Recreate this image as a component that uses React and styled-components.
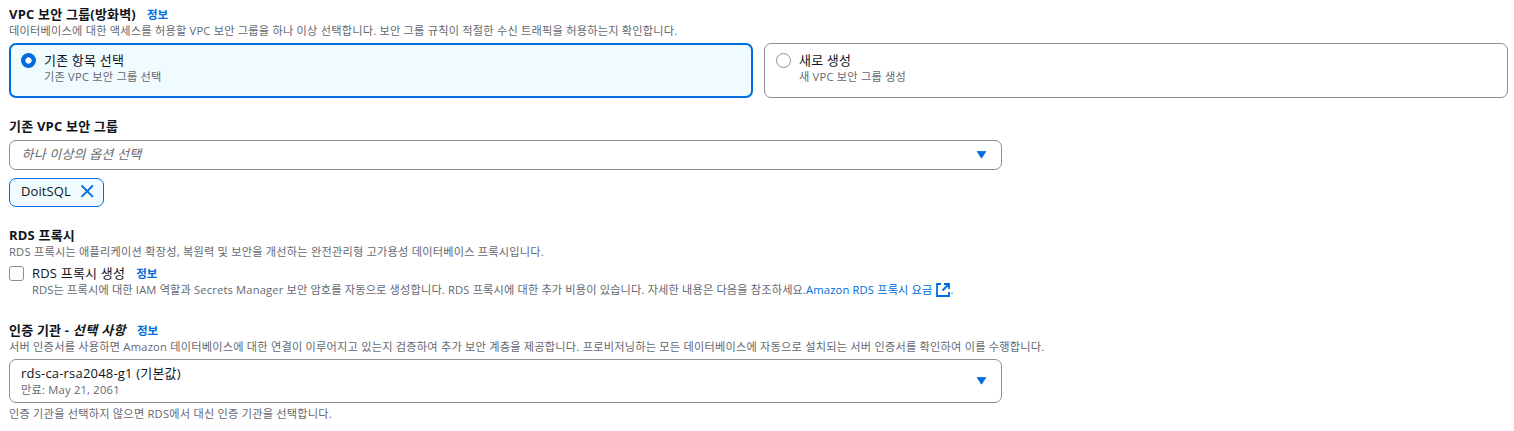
import React from "react";
import styled, { createGlobalStyle } from "styled-components";

const blue = "#006ce0";
const ink = "#0f141a";
const grey = "#656871";
const line = "#8c8c94";

const GlobalStyle = createGlobalStyle`
  * { box-sizing: border-box; }
  body {
    margin: 0;
    background: #fff;
    color: ${ink};
    font-family: "Open Sans", "Noto Sans CJK KR", sans-serif;
    font-size: 13px;
    line-height: 18px;
    white-space: nowrap;
  }
`;

const Form = styled.main`
  display: flex;
  flex-direction: column;
  gap: 19px;
  padding: 5px 6px 0 9px;
`;

const Field = styled.section`
  display: flex;
  flex-direction: column;
`;

const LabelRow = styled.div`
  display: flex;
  align-items: flex-start;
  gap: 11px;
  height: 18px;
`;

const Label = styled.span`
  font-weight: ${(p) => (p.$plain ? 400 : 700)};
  line-height: 18px;
  letter-spacing: 0.2px;

  i {
    letter-spacing: 0.4px;
  }
`;

const OptionLabel = styled.div`
  height: 18px;
  line-height: 18px;
  letter-spacing: 0.19px;
`;

const InfoLink = styled.a`
  color: ${blue};
  font-size: 11.5px;
  font-weight: 700;
  line-height: 19px;
`;

const Hint = styled.div`
  display: flex;
  align-items: center;
  height: 15px;
  color: ${grey};
  font-size: 11.2px;
  line-height: 15px;
  letter-spacing: ${(p) => (p.$tight ? 0.15 : 0.21)}px;
`;

const FooterHint = styled(Hint)`
  margin-top: 3px;
`;

const Tiles = styled.div`
  display: grid;
  grid-template-columns: 1fr 1fr;
  gap: 11px;
  margin-top: 5px;
`;

const Tile = styled.div`
  display: flex;
  gap: 8px;
  height: 55px;
  padding: ${(p) => (p.$selected ? "6px 9px" : "7px 10px")};
  padding-left: ${(p) => (p.$selected ? 10 : 11)}px;
  border: ${(p) => (p.$selected ? `2px solid ${blue}` : `1px solid ${line}`)};
  border-radius: 7px;
  background: ${(p) => (p.$selected ? "#f0fbff" : "#fff")};
`;

const Radio = styled.span`
  width: 15px;
  height: 15px;
  margin-top: 2px;
  border: ${(p) => (p.$selected ? "none" : `1px solid ${line}`)};
  border-radius: 50%;
  background: ${(p) => (p.$selected ? `radial-gradient(circle, #fff 2.7px, ${blue} 3.6px)` : "#fff")};
`;

const Checkbox = styled.span`
  width: 15px;
  height: 15px;
  margin-top: 2px;
  border: 1px solid ${line};
  border-radius: 3px;
`;

const CheckRow = styled.div`
  display: flex;
  gap: 8px;
  margin: 5px 0;
`;

const Stack = styled.div`
  display: flex;
  flex-direction: column;
`;

const Select = styled.div`
  display: flex;
  align-items: center;
  justify-content: space-between;
  width: 993px;
  height: ${(p) => p.$height}px;
  margin-top: 5px;
  padding: 0 14px 0 11px;
  border: 1px solid ${line};
  border-radius: 7px;
`;

const SelectedOption = styled(Stack)`
  padding-bottom: 1px;
`;

const Placeholder = styled.span`
  padding: 0 0 2px 0.5px;
  color: ${grey};
  font-style: italic;
  letter-spacing: 0.17px;
`;

const Token = styled.div`
  display: flex;
  align-items: center;
  justify-content: space-between;
  width: 95px;
  height: 29px;
  margin-top: 8px;
  padding: 0 9px 3px 11px;
  border: 1px solid ${blue};
  border-radius: 7px;
  background: #f0fbff;
  letter-spacing: 0.1px;
`;

const ExternalLink = styled.a`
  display: inline-flex;
  align-items: center;
  gap: 4px;
  color: ${blue};
`;

const Caret = () => (
  <svg width="11" height="10" viewBox="0 0 11 10">
    <path d="M1.2 1.5h8.6L5.5 8.2z" fill={blue} stroke={blue} strokeWidth=".8" strokeLinejoin="round" />
  </svg>
);

const Close = () => (
  <svg width="14" height="14" viewBox="0 0 14 14">
    <path d="M1.5 1.5l11.4 11.4M12.9 1.5L1.5 12.9" stroke={blue} strokeWidth="1.8" />
  </svg>
);

const External = () => (
  <svg width="14" height="14" viewBox="0 0 14 14" fill="none" stroke={blue} strokeWidth="1.8">
    <path d="M5 1H1v12h12V9M8 1h5v5M13 1L6.5 7.5" />
  </svg>
);

export default function App() {
  return (
    <>
      <GlobalStyle />
      <Form>
        <Field>
          <LabelRow>
            <Label>VPC 보안 그룹(방화벽)</Label>
            <InfoLink>정보</InfoLink>
          </LabelRow>
          <Hint>데이터베이스에 대한 액세스를 허용할 VPC 보안 그룹을 하나 이상 선택합니다. 보안 그룹 규칙이 적절한 수신 트래픽을 허용하는지 확인합니다.</Hint>
          <Tiles>
            <Tile $selected>
              <Radio $selected />
              <Stack>
                <OptionLabel>기존 항목 선택</OptionLabel>
                <Hint>기존 VPC 보안 그룹 선택</Hint>
              </Stack>
            </Tile>
            <Tile>
              <Radio />
              <Stack>
                <OptionLabel>새로 생성</OptionLabel>
                <Hint>새 VPC 보안 그룹 생성</Hint>
              </Stack>
            </Tile>
          </Tiles>
        </Field>

        <Field>
          <LabelRow>
            <Label>기존 VPC 보안 그룹</Label>
          </LabelRow>
          <Select $height={30}>
            <Placeholder>하나 이상의 옵션 선택</Placeholder>
            <Caret />
          </Select>
          <Token>
            DoitSQL
            <Close />
          </Token>
        </Field>

        <Field>
          <LabelRow>
            <Label>RDS 프록시</Label>
          </LabelRow>
          <Hint>RDS 프록시는 애플리케이션 확장성, 복원력 및 보안을 개선하는 완전관리형 고가용성 데이터베이스 프록시입니다.</Hint>
          <CheckRow>
            <Checkbox />
            <Stack>
              <LabelRow>
                <Label $plain>RDS 프록시 생성</Label>
                <InfoLink>정보</InfoLink>
              </LabelRow>
              <Hint $tight>
                RDS는 프록시에 대한 IAM 역할과 Secrets Manager 보안 암호를 자동으로 생성합니다. RDS 프록시에 대한 추가 비용이 있습니다. 자세한 내용은 다음을 참조하세요.
                <ExternalLink>
                  Amazon RDS 프록시 요금
                  <External />
                </ExternalLink>
                .
              </Hint>
            </Stack>
          </CheckRow>
        </Field>

        <Field>
          <LabelRow>
            <Label>
              인증 기관 - <i>선택 사항</i>
            </Label>
            <InfoLink>정보</InfoLink>
          </LabelRow>
          <Hint>서버 인증서를 사용하면 Amazon 데이터베이스에 대한 연결이 이루어지고 있는지 검증하여 추가 보안 계층을 제공합니다. 프로비저닝하는 모든 데이터베이스에 자동으로 설치되는 서버 인증서를 확인하여 이를 수행합니다.</Hint>
          <Select $height={44}>
            <SelectedOption>
              <OptionLabel>rds-ca-rsa2048-g1 (기본값)</OptionLabel>
              <Hint>만료: May 21, 2061</Hint>
            </SelectedOption>
            <Caret />
          </Select>
          <FooterHint>인증 기관을 선택하지 않으면 RDS에서 대신 인증 기관을 선택합니다.</FooterHint>
        </Field>
      </Form>
    </>
  );
}
